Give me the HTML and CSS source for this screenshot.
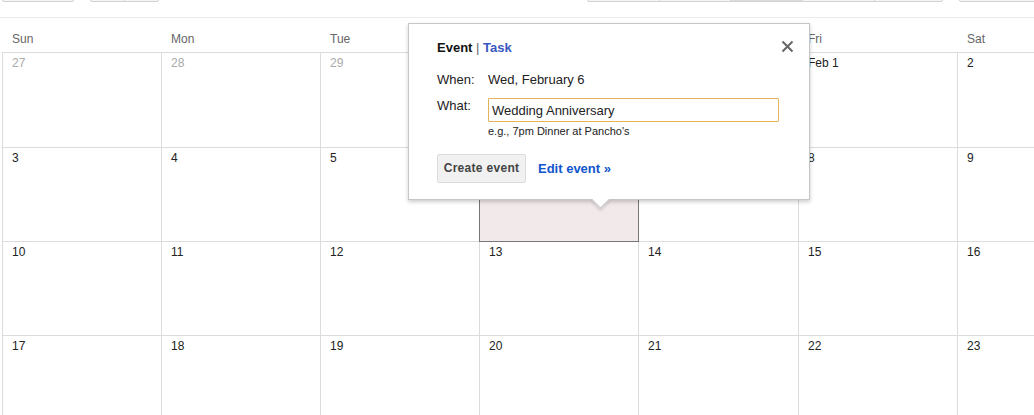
FILE: index.html
```html
<!DOCTYPE html>
<html>
<head>
<meta charset="utf-8">
<link rel="stylesheet" href="styles.css">
</head>
<body>
<div class="page">
  <div class="toolbar">
    <div class="btn btn-today"></div>
    <div class="btn-group group-nav">
      <div class="seg seg-nav"></div>
      <div class="seg seg-nav"></div>
    </div>
    <div class="btn-group group-views">
      <div class="seg seg-v1"></div>
      <div class="seg seg-v2"></div>
      <div class="seg seg-v3 seg-on"></div>
      <div class="seg seg-v4"></div>
      <div class="seg seg-v5"></div>
    </div>
    <div class="btn btn-more"></div>
  </div>

  <div class="calendar">
    <div class="dow-row">
      <div class="dow">Sun</div>
      <div class="dow">Mon</div>
      <div class="dow">Tue</div>
      <div class="dow">Wed</div>
      <div class="dow">Thu</div>
      <div class="dow">Fri</div>
      <div class="dow">Sat</div>
    </div>
    <div class="grid">
      <div class="cell"><span class="num out">27</span></div>
      <div class="cell"><span class="num out">28</span></div>
      <div class="cell"><span class="num out">29</span></div>
      <div class="cell"><span class="num out">30</span></div>
      <div class="cell"><span class="num out">31</span></div>
      <div class="cell"><span class="num">Feb 1</span></div>
      <div class="cell"><span class="num">2</span></div>

      <div class="cell"><span class="num">3</span></div>
      <div class="cell"><span class="num">4</span></div>
      <div class="cell"><span class="num">5</span></div>
      <div class="cell cell-sel"><span class="num">6</span></div>
      <div class="cell"><span class="num">7</span></div>
      <div class="cell"><span class="num">8</span></div>
      <div class="cell"><span class="num">9</span></div>

      <div class="cell"><span class="num">10</span></div>
      <div class="cell"><span class="num">11</span></div>
      <div class="cell"><span class="num">12</span></div>
      <div class="cell"><span class="num">13</span></div>
      <div class="cell"><span class="num">14</span></div>
      <div class="cell"><span class="num">15</span></div>
      <div class="cell"><span class="num">16</span></div>

      <div class="cell"><span class="num">17</span></div>
      <div class="cell"><span class="num">18</span></div>
      <div class="cell"><span class="num">19</span></div>
      <div class="cell"><span class="num">20</span></div>
      <div class="cell"><span class="num">21</span></div>
      <div class="cell"><span class="num">22</span></div>
      <div class="cell"><span class="num">23</span></div>
    </div>
  </div>

  <div class="popup">
    <div class="pop-title"><b class="tab-on">Event</b> <span class="sep">|</span> <span class="tab-link">Task</span></div>
    <svg class="pop-close" width="13" height="13" viewBox="0 0 13 13"><path d="M1.5 1.5 L11.5 11.5 M11.5 1.5 L1.5 11.5" stroke="#666" stroke-width="2" fill="none"/></svg>
    <div class="pop-row row-when">
      <div class="pop-label">When:</div>
      <div class="pop-value">Wed, February 6</div>
    </div>
    <div class="pop-row row-what">
      <div class="pop-label">What:</div>
      <div class="pop-field">
        <div class="pop-input">Wedding Anniversary</div>
        <div class="pop-hint">e.g., 7pm Dinner at Pancho's</div>
      </div>
    </div>
    <div class="pop-actions">
      <div class="pop-btn">Create event</div>
      <span class="pop-edit">Edit event »</span>
    </div>
    <div class="pop-arrow"></div>
  </div>
</div>
</body>
</html>
```

FILE: styles.css
```css
html, body {
  margin: 0;
  padding: 0;
  background: #fff;
}
body {
  width: 1034px;
  height: 415px;
  overflow: hidden;
  font-family: "Liberation Sans", Arial, sans-serif;
  color: #222;
}
.page {
  position: relative;
  width: 1034px;
  height: 415px;
}

/* toolbar (mostly scrolled off the top) */
.toolbar {
  display: flex;
  align-items: flex-start;
  height: 17px;
  border-bottom: 1px solid #ebebeb;
  padding-left: 2px;
}
.btn, .btn-group {
  box-sizing: border-box;
  flex-shrink: 0;
  height: 28px;
  margin-top: -26px;
  border: 1px solid #d3d3d3;
  border-radius: 2px;
  background: #f5f5f5;
}
.btn-today { width: 72px; }
.group-nav { margin-left: 16px; display: flex; width: 69px; }
.group-views { margin-left: 428px; display: flex; width: 356px; }
.btn-more { margin-left: 16px; width: 90px; }
.seg {
  height: 100%;
  border-left: 1px solid #d3d3d3;
}
.seg:first-child { border-left: none; }
.seg-nav { flex: 1; }
.seg-v1 { width: 71px; }
.seg-v2 { width: 70px; }
.seg-v3 { width: 71px; }
.seg-v4 { width: 71px; }
.seg-v5 { flex: 1; }
.seg-on { background: #dcdcdc; }

/* calendar */
.calendar {
  margin-left: 2px;
  width: 1115px;
}
.dow-row {
  display: grid;
  grid-template-columns: 159px 159px 159px 159px 160px 159px 159px;
  height: 34px;
}
.dow {
  padding: 14px 0 0 10px;
  font-size: 12px;
  line-height: 14px;
  color: #666;
}
.grid {
  display: grid;
  grid-template-columns: 159px 159px 159px 159px 160px 159px 159px;
  grid-template-rows: 95px 94px 94px 94px;
  border-top: 1px solid #dcdcdc;
}
.cell {
  box-sizing: border-box;
  border-left: 1px solid #dcdcdc;
  border-bottom: 1px solid #dcdcdc;
  padding: 3px 0 0 9px;
  font-size: 12px;
  line-height: 14px;
}
.num { color: #222; }
.num.out { color: #aaa; }
.cell-sel {
  position: relative;
  z-index: 1;
  background: #f2eaea;
  border-left-color: #777;
  border-bottom-color: #777;
  box-shadow: 1px 0 0 #777;
}

/* popup */
.popup {
  position: absolute;
  left: 408px;
  top: 23px;
  z-index: 5;
  box-sizing: border-box;
  width: 402px;
  height: 177px;
  padding: 16px 28px 0 28px;
  background: #fff;
  border: 1px solid #c6c6c6;
  box-shadow: 0 2px 4px rgba(0, 0, 0, 0.2);
  font-size: 13px;
  line-height: 15px;
  color: #222;
}
.pop-title {
  height: 15px;
  color: #222;
}
.tab-on { color: #111; font-weight: bold; }
.sep { color: #666; }
.tab-link { color: #3a56bf; font-weight: bold; }
.pop-close {
  position: absolute;
  right: 15px;
  top: 16px;
}
.pop-row {
  display: grid;
  grid-template-columns: 51px 1fr;
}
.row-when { margin-top: 17px; }
.row-what { margin-top: 11px; }
.pop-label { color: #222; }
.pop-value { color: #222; }
.pop-input {
  box-sizing: border-box;
  width: 291px;
  height: 24px;
  padding: 4px 3px 0 3px;
  border: 1px solid #e5b35a;
  border-radius: 1px;
  color: #222;
  line-height: 15px;
}
.pop-hint {
  margin-top: 3px;
  font-size: 11px;
  line-height: 13px;
  color: #222;
}
.pop-actions {
  display: flex;
  align-items: center;
  margin-top: 16px;
}
.pop-btn {
  box-sizing: border-box;
  flex-shrink: 0;
  width: 89px;
  height: 29px;
  border: 1px solid #dcdcdc;
  border-radius: 2px;
  background: #f1f1f1;
  color: #444;
  font-weight: bold;
  font-size: 12px;
  letter-spacing: 0.3px;
  line-height: 27px;
  text-align: center;
  white-space: nowrap;
}
.pop-edit {
  margin-left: 12px;
  color: #1155cc;
  font-weight: bold;
  font-size: 13px;
  white-space: nowrap;
}
.pop-arrow {
  position: absolute;
  left: 185px;
  bottom: -7px;
  width: 12px;
  height: 12px;
  background: #fff;
  border-right: 1px solid #c6c6c6;
  border-bottom: 1px solid #c6c6c6;
  transform: rotate(45deg);
  box-shadow: 2px 2px 3px rgba(0, 0, 0, 0.12);
}
```
